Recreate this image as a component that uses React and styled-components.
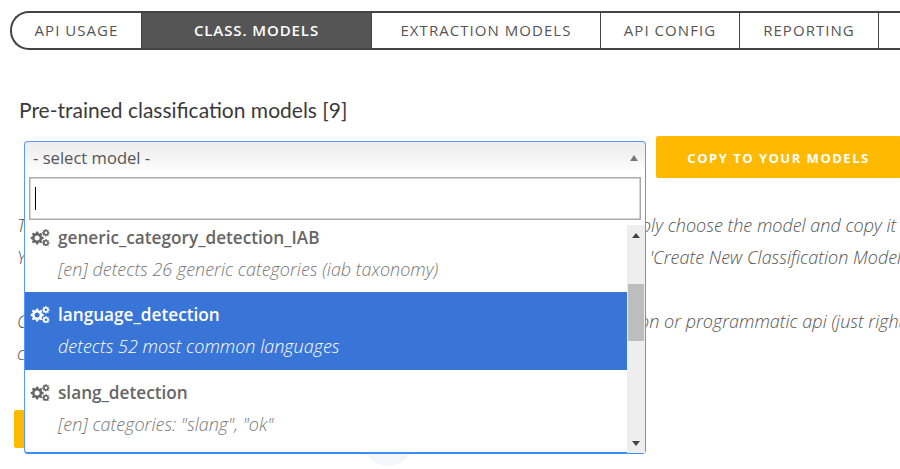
import React from "react";
import styled, { createGlobalStyle } from "styled-components";

const GlobalStyle = createGlobalStyle`
  html, body {
    margin: 0;
    padding: 0;
    background: #fff;
    overflow: hidden;
  }
  * { box-sizing: border-box; }
`;

const Page = styled.div`
  width: 900px;
  height: 469px;
  overflow: hidden;
  position: relative;
  font-family: "Open Sans", sans-serif;
  padding: 11px 0 0 10px;
`;

const Tabs = styled.nav`
  display: flex;
  width: 1000px;
  height: 39px;
  border: 2px solid #444;
  border-right: 0;
  border-radius: 19px 0 0 19px;
`;

const Tab = styled.a`
  display: flex;
  align-items: center;
  justify-content: center;
  flex: none;
  width: ${(p) => p.$w}px;
  height: 100%;
  padding-bottom: 1px;
  font-size: 15px;
  letter-spacing: ${(p) => (p.$active ? "0.9px" : "1.05px")};
  color: ${(p) => (p.$active ? "#fff" : "#555")};
  font-weight: ${(p) => (p.$active ? 600 : 400)};
  background: ${(p) => (p.$active ? "#555" : "transparent")};
  border-left: ${(p) => (p.$first ? "0" : "1.5px solid #444")};
`;

const Heading = styled.h2`
  margin: 47px 0 0 9px;
  font-family: "Lato", sans-serif;
  font-weight: 400;
  font-size: 21px;
  line-height: 26px;
  color: #3a3a3a;
`;

const SelectRow = styled.div`
  display: flex;
  align-items: flex-start;
  margin: 13px 0 0 14px;
  gap: 10px;
  width: 1000px;
`;

const SelectWrap = styled.div`
  position: relative;
  width: 622px;
  margin-top: 5px;
`;

const SelectHead = styled.div`
  display: flex;
  align-items: center;
  justify-content: space-between;
  height: 32px;
  padding: 0 7px 0 8px;
  border: 1px solid #5897fb;
  border-bottom: 0;
  border-radius: 4px 4px 0 0;
  background: linear-gradient(to bottom, #eee 0%, #f2f2f2 40%, #fff 100%);
  font-size: 16.6px;
  color: #555;
`;

const Caret = styled.span`
  width: 0;
  height: 0;
  border-left: 4.5px solid transparent;
  border-right: 4.5px solid transparent;
  border-bottom: 6px solid #777;
`;

const Dropdown = styled.div`
  position: absolute;
  z-index: 2;
  top: 32px;
  left: 0;
  width: 622px;
  height: 281px;
  background: #fff;
  border: 1px solid #5897fb;
  border-top: 0;
  border-bottom: 2px solid #3d8cf8;
  border-radius: 0 0 4px 4px;
`;

const SearchBox = styled.div`
  display: flex;
  align-items: center;
  margin: 4px 4px 0 4px;
  height: 43px;
  padding-left: 5px;
  border: 1px solid #aaa;
  box-shadow: inset 0 0 0 0.5px #aaa;
  background: #fff;
`;

const TextCursor = styled.span`
  width: 1px;
  height: 23px;
  background: #000;
`;

const ListArea = styled.div`
  display: flex;
  height: 231px;
  margin-top: 2px;
`;

const List = styled.ul`
  flex: 1;
  list-style: none;
  margin: 0;
  padding: 0;
`;

const Item = styled.li`
  height: ${(p) => (p.$cut ? "70px" : "78px")};
  padding: ${(p) => (p.$cut ? "0" : "7px")} 6px 0 5px;
  color: ${(p) => (p.$selected ? "#fff" : "#666")};
  background: ${(p) => (p.$selected ? "#3875d7" : "transparent")};
`;

const ItemTitle = styled.div`
  display: flex;
  align-items: center;
  gap: 8px;
  height: 30px;
  font-size: 17.2px;
  font-weight: 600;

  svg {
    margin-left: -1px;
  }
`;

const ItemDesc = styled.div`
  margin: 2px 0 0 28px;
  height: 30px;
  line-height: 30px;
  font-size: 18px;
  font-weight: 300;
  font-style: italic;
  color: ${(p) => (p.$selected ? "#fff" : "#777")};
`;

const Scrollbar = styled.div`
  position: relative;
  flex: none;
  width: 18px;
  margin-top: 3px;
  background: #eee;
`;

const ScrollArrow = styled.span`
  position: absolute;
  left: 5px;
  width: 0;
  height: 0;
  border-left: 4.5px solid transparent;
  border-right: 4.5px solid transparent;
  ${(p) => (p.$down ? "bottom: 7px; border-top: 5px solid #444;" : "top: 8px; border-bottom: 5px solid #444;")}
`;

const ScrollThumb = styled.div`
  position: absolute;
  left: 1px;
  top: 59px;
  width: 16px;
  height: 57px;
  background: #bdbdbd;
`;

const CopyButton = styled.button`
  flex: none;
  width: 245px;
  height: 42px;
  border: 0;
  border-radius: 2px;
  background: #ffb900;
  color: #fff;
  font-family: "Open Sans", sans-serif;
  font-size: 13px;
  font-weight: 700;
  letter-spacing: 1.5px;
  text-align: center;
  padding: 1px 0 0 0;
`;

const Copy = styled.div`
  margin: 31px 0 0 7px;
  width: 1000px;
`;

const Line = styled.p`
  margin: ${(p) => (p.$gap ? "32px" : "0")} 0 0 0;
  height: 32px;
  line-height: 32px;
  font-size: 18px;
  font-weight: 300;
  font-style: italic;
  color: #555;
  white-space: nowrap;
`;

const YellowBlock = styled.div`
  width: 120px;
  height: 38px;
  margin: 41px 0 0 -3px;
  border-radius: 2px;
  background: #ffb900;
`;

const Faint = styled.div`
  position: absolute;
  left: 363px;
  top: 416px;
  width: 50px;
  height: 50px;
  border-radius: 50%;
  background: #f4f6fa;
`;

const GearsIcon = ({ color }) => (
  <svg width="21" height="18" viewBox="0 0 21 18" fill={color}>
    <path
      fillRule="evenodd"
      d="M7.5 3.5l1.6.1.5 1.7 1 .4 1.5-.9 1.3 1.3-.9 1.5.4 1 1.7.5v1.9l-1.7.5-.4 1 .9 1.5-1.3 1.3-1.5-.9-1 .4-.5 1.7H7.2l-.5-1.7-1-.4-1.5.9-1.3-1.3.9-1.5-.4-1-1.7-.5V8.9l1.7-.5.4-1-.9-1.5 1.3-1.3 1.5.9 1-.4zM8.1 7.4a2.5 2.5 0 1 0 0 5 2.5 2.5 0 0 0 0-5z"
    />
    <path
      fillRule="evenodd"
      d="M16.5 1l1 .1.2 1 .6.3.9-.5.7.8-.5.9.2.6 1 .3v1l-1 .2-.3.6.5.9-.8.7-.9-.5-.6.2-.3 1h-1l-.2-1-.6-.3-.9.5-.7-.8.5-.9-.2-.6-1-.3v-1l1-.2.3-.6-.5-.9.8-.7.9.5.6-.2zM17 3.4a1.3 1.3 0 1 0 0 2.6 1.3 1.3 0 0 0 0-2.6z"
    />
    <path
      fillRule="evenodd"
      d="M16.5 11l1 .1.2 1 .6.3.9-.5.7.8-.5.9.2.6 1 .3v1l-1 .2-.3.6.5.9-.8.7-.9-.5-.6.2-.3.6h-1l-.2-.6-.6-.3-.9.5-.7-.8.5-.9-.2-.6-1-.3v-1l1-.2.3-.6-.5-.9.8-.7.9.5.6-.2zM17 13.4a1.3 1.3 0 1 0 0 2.6 1.3 1.3 0 0 0 0-2.6z"
    />
  </svg>
);

const models = [
  { name: "generic_category_detection_IAB", desc: "[en] detects 26 generic categories (iab taxonomy)", cut: true },
  { name: "language_detection", desc: "detects 52 most common languages", selected: true },
  { name: "slang_detection", desc: '[en] categories: "slang", "ok"' },
];

export default function App() {
  return (
    <Page>
      <GlobalStyle />
      <Tabs>
        <Tab $first $w={129}>API USAGE</Tab>
        <Tab $active $w={230}>CLASS. MODELS</Tab>
        <Tab $w={229}>EXTRACTION MODELS</Tab>
        <Tab $w={139}>API CONFIG</Tab>
        <Tab $w={139}>REPORTING</Tab>
        <Tab $w={120} />
      </Tabs>
      <Heading>Pre-trained classification models [9]</Heading>
      <SelectRow>
        <SelectWrap>
          <SelectHead>
            - select model -
            <Caret />
          </SelectHead>
          <Dropdown>
            <SearchBox>
              <TextCursor />
            </SearchBox>
            <ListArea>
              <List>
                {models.map((m) => (
                  <Item key={m.name} $selected={m.selected} $cut={m.cut}>
                    <ItemTitle>
                      <GearsIcon color={m.selected ? "#fff" : "#666"} />
                      {m.name}
                    </ItemTitle>
                    <ItemDesc $selected={m.selected}>{m.desc}</ItemDesc>
                  </Item>
                ))}
              </List>
              <Scrollbar>
                <ScrollArrow />
                <ScrollThumb />
                <ScrollArrow $down />
              </Scrollbar>
            </ListArea>
          </Dropdown>
        </SelectWrap>
        <CopyButton>COPY TO YOUR MODELS</CopyButton>
      </SelectRow>
      <Copy>
        <Line>To use any one of our pre-trained classification models in your own account, simply choose the model and copy it</Line>
        <Line>You can also build a new model of your own from scratch, just go to a section for 'Create New Classification Model'</Line>
        <Line $gap>Classification models can then be used from the online web dashboard application or programmatic api (just right</Line>
        <Line>click on a model)</Line>
        <YellowBlock />
      </Copy>
      <Faint />
    </Page>
  );
}
